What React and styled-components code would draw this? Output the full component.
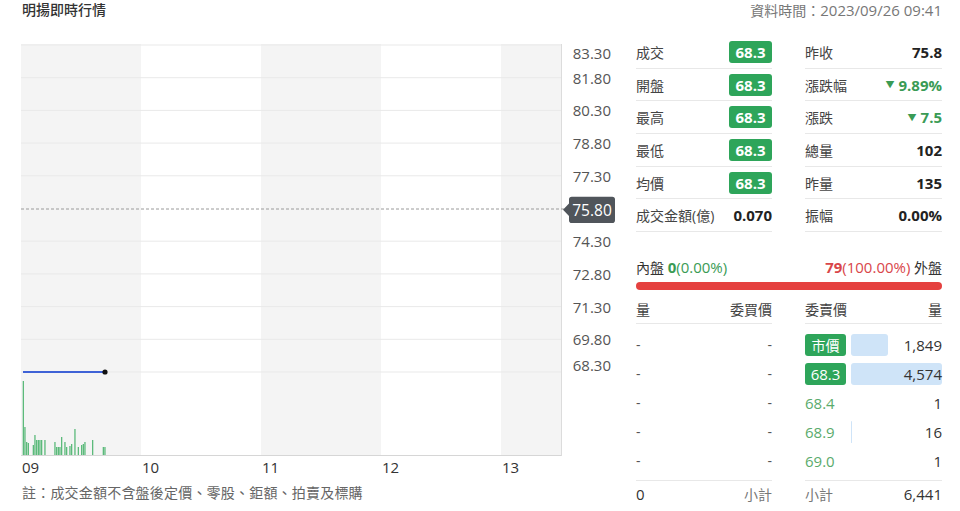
import React from 'react'
import styled, { createGlobalStyle } from 'styled-components'

const GlobalStyle = createGlobalStyle`
  body {
    margin: 0;
    background: #fff;
    font-family: "Open Sans", "Noto Sans CJK TC", sans-serif;
    font-size: 14px;
    color: #333;
  }
`

const GREEN = '#2ea55a'
const LIGHT_GREEN = '#5aab6c'
const RED = '#e5413f'

// chart data (x in px from plot left, h = bar height)
const VOLUME = [
  [1.7, 74], [3.3, 28], [5, 13], [6.7, 12], [11.7, 10], [13.3, 20], [15, 15],
  [16.7, 15], [18.3, 15], [20, 15], [23.3, 15], [33.3, 13], [35, 8], [36.7, 8],
  [38.3, 8], [40, 18], [43.3, 13], [45, 8], [48.3, 9], [50, 11], [53.3, 26],
  [56.7, 8], [60, 10], [61.7, 11], [63.3, 13], [71, 15], [81.7, 8], [83.3, 8],
]
const TICKS = ['83.30', '81.80', '80.30', '78.80', '77.30', '75.80', '74.30', '72.80', '71.30', '69.80', '68.30']
const HOURS = ['09', '10', '11', '12', '13']

const STATS = [
  ['成交', '68.3', 'badge', '昨收', '75.8', 'bold'],
  ['開盤', '68.3', 'badge', '漲跌幅', '9.89%', 'down'],
  ['最高', '68.3', 'badge', '漲跌', '7.5', 'down'],
  ['最低', '68.3', 'badge', '總量', '102', 'bold'],
  ['均價', '68.3', 'badge', '昨量', '135', 'bold'],
  ['成交金額(億)', '0.070', 'bold', '振幅', '0.00%', 'bold'],
]

const ASKS = [
  { price: '市價', qty: 1849, badge: true, cjk: true },
  { price: '68.3', qty: 4574, badge: true },
  { price: '68.4', qty: 1 },
  { price: '68.9', qty: 16 },
  { price: '69.0', qty: 1 },
]
const MAX_ASK = 4574

const Page = styled.div`
  width: 960px;
  height: 511px;
  box-sizing: border-box;
  padding: 0 18px 0 21px;
  overflow: hidden;
`
const Header = styled.div`
  display: flex;
  justify-content: space-between;
  align-items: center;
  height: 20px;
  line-height: 20px;
`
const Title = styled.h1`
  margin: 0 0 0 1px;
  font-size: 14px;
  font-weight: 500;
  color: #333;
`
const Stamp = styled.span`
  color: #777;
`
const Num = styled.span`
  font-size: 15px;
`
const Main = styled.div`
  display: flex;
  gap: 19px;
  margin-top: 16px;
`
const ChartCol = styled.div`
  width: 596px;
  padding-top: 8px;
  display: flex;
  flex-direction: column;
`
const ChartSvg = styled.svg`
  display: block;
  overflow: visible;
  font-family: "Open Sans", "Noto Sans CJK TC", sans-serif;
`
const Note = styled.div`
  margin-top: 7px;
  margin-left: 1px;
  line-height: 20px;
  color: #666;
  letter-spacing: 0.2px;
`
const Panel = styled.div`
  width: 306px;
  display: flex;
  flex-direction: column;
`
const StatGrid = styled.div`
  display: grid;
  grid-template-columns: 136px 137px;
  column-gap: 33px;
`
const StatCell = styled.div`
  height: 32.7px;
  box-sizing: border-box;
  border-bottom: 1px solid #e8e8e8;
  display: flex;
  align-items: center;
  justify-content: space-between;
  color: #444;
`
const Badge = styled.span`
  display: inline-flex;
  align-items: center;
  justify-content: center;
  width: ${p => p.$w || 43}px;
  height: 22px;
  border-radius: 3px;
  background: ${GREEN};
  color: #fff;
  font-weight: ${p => (p.$light ? 400 : 700)};
  font-size: ${p => (p.$cjk ? 14 : 15)}px;
`
const Value = styled.span`
  font-weight: 700;
  font-size: 15px;
  color: ${p => (p.$down ? '#3a9b55' : '#222')};
  display: inline-flex;
  align-items: center;
  gap: 4px;
`
const Tri = styled.span`
  font-size: 9px;
`
const FlowRow = styled.div`
  margin-top: 25px;
  line-height: 20px;
  display: flex;
  justify-content: space-between;
  color: #333;
`
const Pct = styled.span`
  font-size: 15px;
  color: ${p => p.$c};
  b { font-weight: 700; }
`
const FlowBar = styled.div`
  margin-top: 4px;
  height: 8px;
  border-radius: 4px;
  background: ${RED};
`
const Book = styled.div`
  display: flex;
  gap: 33px;
  margin-top: 4px;
`
const Side = styled.div`
  width: ${p => p.$w}px;
  display: flex;
  flex-direction: column;
`
const HeadRow = styled.div`
  height: 30px;
  box-sizing: border-box;
  border-bottom: 1px solid #e8e8e8;
  display: flex;
  justify-content: space-between;
  align-items: center;
  color: #444;
`
const Body = styled.div`
  padding-top: 6px;
  display: flex;
  flex-direction: column;
`
const BookRow = styled.div`
  height: 29px;
  display: flex;
  align-items: center;
  justify-content: space-between;
  gap: 5px;
  color: #555;
`
const AskPrice = styled.span`
  width: 41px;
  font-size: 15px;
  color: ${LIGHT_GREEN};
`
const QtyCell = styled.span`
  flex: 1;
  height: 22px;
  position: relative;
  display: flex;
  align-items: center;
  justify-content: flex-end;
  color: #333;
`
const QtyBar = styled.span`
  position: absolute;
  left: 0;
  top: 0;
  bottom: 0;
  border-radius: 3px;
  background: #cfe4f8;
`
const QtyText = styled.span`
  position: relative;
  font-size: 15px;
`
const SumRow = styled.div`
  margin-top: 5px;
  height: 27px;
  box-sizing: border-box;
  border-top: 1px solid #e8e8e8;
  display: flex;
  align-items: center;
  justify-content: space-between;
  color: #333;
`
const Muted = styled.span`
  color: #777;
`

function Chart() {
  const step = 32.7
  const lineY = i => 1 + i * step
  const labelY = i => (i === 0 ? 9 : i === 10 ? 321 : lineY(i))
  return (
    <ChartSvg width="596" height="432" viewBox="0 0 596 432">
      {[0, 240, 480].map(x => (
        <rect key={x} x={x} y="0" width={x === 480 ? 60 : 120} height="411" fill="#f4f4f4" />
      ))}
      {TICKS.map((t, i) =>
        i === 5 ? null : (
          <line key={t} x1="0" x2="540" y1={lineY(i)} y2={lineY(i)} stroke="#e9e9e9" strokeWidth="1" />
        )
      )}
      <line x1="540.5" x2="540.5" y1="0" y2="412" stroke="#dcdcdc" />
      <line x1="0" x2="540" y1="411.5" y2="411.5" stroke="#d6d6d6" />
      <line x1="0" x2="543" y1="165" y2="165" stroke="#9a9a9a" strokeDasharray="3 2" />
      {VOLUME.map(([x, h], i) => (
        <rect key={i} x={x} y={411 - h} width="1.3" height={h} fill="#5cba7b" />
      ))}
      <line x1="2" x2="84" y1="328" y2="328" stroke="#3e62d6" strokeWidth="2" />
      <circle cx="84" cy="328" r="2.6" fill="#111" />
      {TICKS.map((t, i) =>
        i === 5 ? null : (
          <text key={t} x="590" y={labelY(i)} textAnchor="end" dominantBaseline="central" fontSize="15" fill="#555">
            {t}
          </text>
        )
      )}
      <path
        d="M542 165.8 L548 159.5 L548 155.5 Q548 152.7 550.8 152.7 L591.2 152.7 Q594 152.7 594 155.5 L594 176.2 Q594 179 591.2 179 L550.8 179 Q548 179 548 176.2 L548 172 Z"
        fill="#50555b"
      />
      <text x="571" y="166" textAnchor="middle" dominantBaseline="central" fontSize="15.5" fill="#fff">
        75.80
      </text>
      {HOURS.map((h, i) => (
        <text key={h} x={1 + i * 120} y="423" dominantBaseline="central" fontSize="15" fill="#333">
          {h}
        </text>
      ))}
    </ChartSvg>
  )
}

function StatValue({ value, kind }) {
  if (kind === 'badge') return <Badge>{value}</Badge>
  if (kind === 'down')
    return (
      <Value $down>
        <Tri>▼</Tri>
        {value}
      </Value>
    )
  return <Value>{value}</Value>
}

export default function App() {
  return (
    <Page>
      <GlobalStyle />
      <Header>
        <Title>明揚即時行情</Title>
        <Stamp>
          資料時間：<Num>2023/09/26 09:41</Num>
        </Stamp>
      </Header>
      <Main>
        <ChartCol>
          <Chart />
          <Note>註：成交金額不含盤後定價、零股、鉅額、拍賣及標購</Note>
        </ChartCol>
        <Panel>
          <StatGrid>
            {STATS.map(([l1, v1, k1, l2, v2, k2]) => (
              <React.Fragment key={l1}>
                <StatCell>
                  <span>{l1}</span>
                  <StatValue value={v1} kind={k1} />
                </StatCell>
                <StatCell>
                  <span>{l2}</span>
                  <StatValue value={v2} kind={k2} />
                </StatCell>
              </React.Fragment>
            ))}
          </StatGrid>

          <FlowRow>
            <span>
              內盤 <Pct $c="#3a9b55"><b>0</b>(0.00%)</Pct>
            </span>
            <span>
              <Pct $c="#d9464a"><b>79</b>(100.00%)</Pct> 外盤
            </span>
          </FlowRow>
          <FlowBar />

          <Book>
            <Side $w={136}>
              <HeadRow>
                <span>量</span>
                <span>委買價</span>
              </HeadRow>
              <Body>
                {ASKS.map((_, i) => (
                  <BookRow key={i}>
                    <span>-</span>
                    <span>-</span>
                  </BookRow>
                ))}
              </Body>
              <SumRow>
                <Num>0</Num>
                <Muted>小計</Muted>
              </SumRow>
            </Side>
            <Side $w={137}>
              <HeadRow>
                <span>委賣價</span>
                <span>量</span>
              </HeadRow>
              <Body>
                {ASKS.map(a => (
                  <BookRow key={a.price}>
                    {a.badge ? (
                      <Badge $w={41} $light $cjk={a.cjk}>
                        {a.price}
                      </Badge>
                    ) : (
                      <AskPrice>{a.price}</AskPrice>
                    )}
                    <QtyCell>
                      <QtyBar style={{ width: `${(a.qty / MAX_ASK) * 100}%` }} />
                      <QtyText>{a.qty.toLocaleString('en-US')}</QtyText>
                    </QtyCell>
                  </BookRow>
                ))}
              </Body>
              <SumRow>
                <Muted>小計</Muted>
                <Num>6,441</Num>
              </SumRow>
            </Side>
          </Book>
        </Panel>
      </Main>
    </Page>
  )
}
